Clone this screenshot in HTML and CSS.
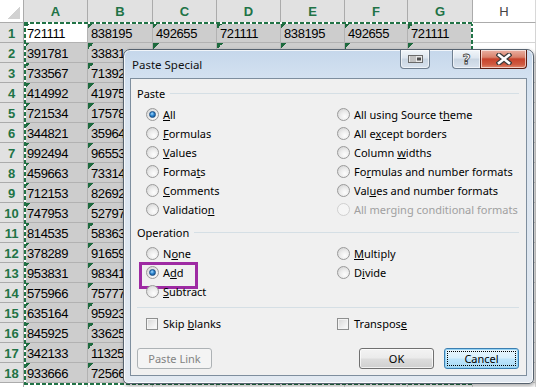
FILE: index.html
```html
<!DOCTYPE html>
<html>
<head>
<meta charset="utf-8">
<link rel="stylesheet" href="styles.css">
</head>
<body>
<div class="app">
  <div class="sheet">
    <div class="corner"></div>
    <div class="ch sel">A</div><div class="ch sel">B</div><div class="ch sel">C</div><div class="ch sel">D</div><div class="ch sel">E</div><div class="ch sel">F</div><div class="ch sel">G</div><div class="ch">H</div>

    <div class="rh sel">1</div><div class="c s act">721111</div><div class="c s">838195</div><div class="c s">492655</div><div class="c s">721111</div><div class="c s">838195</div><div class="c s">492655</div><div class="c s">721111</div><div class="c"></div>
    <div class="rh sel">2</div><div class="c s">391781</div><div class="c s">338314</div><div class="c s"></div><div class="c s"></div><div class="c s"></div><div class="c s"></div><div class="c s"></div><div class="c"></div>
    <div class="rh sel">3</div><div class="c s">733567</div><div class="c s">713928</div><div class="c s"></div><div class="c s"></div><div class="c s"></div><div class="c s"></div><div class="c s"></div><div class="c"></div>
    <div class="rh sel">4</div><div class="c s">414992</div><div class="c s">419753</div><div class="c s"></div><div class="c s"></div><div class="c s"></div><div class="c s"></div><div class="c s"></div><div class="c"></div>
    <div class="rh sel">5</div><div class="c s">721534</div><div class="c s">175786</div><div class="c s"></div><div class="c s"></div><div class="c s"></div><div class="c s"></div><div class="c s"></div><div class="c"></div>
    <div class="rh sel">6</div><div class="c s">344821</div><div class="c s">359647</div><div class="c s"></div><div class="c s"></div><div class="c s"></div><div class="c s"></div><div class="c s"></div><div class="c"></div>
    <div class="rh sel">7</div><div class="c s">992494</div><div class="c s">965531</div><div class="c s"></div><div class="c s"></div><div class="c s"></div><div class="c s"></div><div class="c s"></div><div class="c"></div>
    <div class="rh sel">8</div><div class="c s">459663</div><div class="c s">733149</div><div class="c s"></div><div class="c s"></div><div class="c s"></div><div class="c s"></div><div class="c s"></div><div class="c"></div>
    <div class="rh sel">9</div><div class="c s">712153</div><div class="c s">826924</div><div class="c s"></div><div class="c s"></div><div class="c s"></div><div class="c s"></div><div class="c s"></div><div class="c"></div>
    <div class="rh sel">10</div><div class="c s">747953</div><div class="c s">527971</div><div class="c s"></div><div class="c s"></div><div class="c s"></div><div class="c s"></div><div class="c s"></div><div class="c"></div>
    <div class="rh sel">11</div><div class="c s">814535</div><div class="c s">583634</div><div class="c s"></div><div class="c s"></div><div class="c s"></div><div class="c s"></div><div class="c s"></div><div class="c"></div>
    <div class="rh sel">12</div><div class="c s">378289</div><div class="c s">916598</div><div class="c s"></div><div class="c s"></div><div class="c s"></div><div class="c s"></div><div class="c s"></div><div class="c"></div>
    <div class="rh sel">13</div><div class="c s">953831</div><div class="c s">983415</div><div class="c s"></div><div class="c s"></div><div class="c s"></div><div class="c s"></div><div class="c s"></div><div class="c"></div>
    <div class="rh sel">14</div><div class="c s">575966</div><div class="c s">757772</div><div class="c s"></div><div class="c s"></div><div class="c s"></div><div class="c s"></div><div class="c s"></div><div class="c"></div>
    <div class="rh sel">15</div><div class="c s">635164</div><div class="c s">959233</div><div class="c s"></div><div class="c s"></div><div class="c s"></div><div class="c s"></div><div class="c s"></div><div class="c"></div>
    <div class="rh sel">16</div><div class="c s">845925</div><div class="c s">336256</div><div class="c s"></div><div class="c s"></div><div class="c s"></div><div class="c s"></div><div class="c s"></div><div class="c"></div>
    <div class="rh sel">17</div><div class="c s">342133</div><div class="c s">113257</div><div class="c s"></div><div class="c s"></div><div class="c s"></div><div class="c s"></div><div class="c s"></div><div class="c"></div>
    <div class="rh sel">18</div><div class="c s">933666</div><div class="c s">725661</div><div class="c s"></div><div class="c s"></div><div class="c s"></div><div class="c s"></div><div class="c s"></div><div class="c"></div>
    <div class="rh"></div><div class="c"></div><div class="c"></div><div class="c"></div><div class="c"></div><div class="c"></div><div class="c"></div><div class="c"></div><div class="c"></div>
  </div>

  <div class="ants"></div>

  <div class="dlg">
    <div class="tbar">
      <span class="ttl">Paste Special</span>
      <span class="tb tb-r"><svg width="15" height="8" viewBox="0 0 15 8"><rect x="0.5" y="0.5" width="14" height="7" fill="#e9e9e9" stroke="#6a6a6a"/><path d="M3 1v6M5 1v6M7 1v6" stroke="#9a9a9a" stroke-width="1"/><rect x="9" y="2.5" width="4" height="3" fill="#4d4d4d"/></svg></span>
      <span class="tb tb-h">?</span>
      <span class="tb tb-x"><svg width="16" height="12" viewBox="0 0 16 12"><path d="M3 2L13 10M13 2L3 10" stroke="#3b3b3b" stroke-width="5" stroke-linecap="square"/><path d="M3 2L13 10M13 2L3 10" stroke="#fff" stroke-width="2.6" stroke-linecap="square"/></svg></span>
    </div>
    <div class="pane">
      <div class="legend"><span>Paste</span><i></i></div>
      <div class="opts">
        <div class="col">
          <div class="opt"><span class="rd on"><b></b></span><span><u>A</u>ll</span></div>
          <div class="opt"><span class="rd"></span><span><u>F</u>ormulas</span></div>
          <div class="opt"><span class="rd"></span><span><u>V</u>alues</span></div>
          <div class="opt"><span class="rd"></span><span>Forma<u>t</u>s</span></div>
          <div class="opt"><span class="rd"></span><span><u>C</u>omments</span></div>
          <div class="opt"><span class="rd"></span><span>Validatio<u>n</u></span></div>
        </div>
        <div class="col">
          <div class="opt"><span class="rd"></span><span>All using Source t<u>h</u>eme</span></div>
          <div class="opt"><span class="rd"></span><span>All e<u>x</u>cept borders</span></div>
          <div class="opt"><span class="rd"></span><span>Column <u>w</u>idths</span></div>
          <div class="opt"><span class="rd"></span><span>Fo<u>r</u>mulas and number formats</span></div>
          <div class="opt"><span class="rd"></span><span>Val<u>u</u>es and number formats</span></div>
          <div class="opt dis"><span class="rd"></span><span>All merging conditional formats</span></div>
        </div>
      </div>
      <div class="legend op"><span>Operation</span><i></i></div>
      <div class="opts op">
        <div class="col">
          <div class="opt"><span class="rd"></span><span>N<u>o</u>ne</span></div>
          <div class="opt hl"><span class="rd on"><b></b></span><span>A<u>d</u>d</span></div>
          <div class="opt"><span class="rd"></span><span><u>S</u>ubtract</span></div>
        </div>
        <div class="col">
          <div class="opt"><span class="rd"></span><span><u>M</u>ultiply</span></div>
          <div class="opt"><span class="rd"></span><span>D<u>i</u>vide</span></div>
        </div>
      </div>
      <div class="sep"></div>
      <div class="opts checks">
        <div class="opt"><span class="cb"></span><span>Skip <u>b</u>lanks</span></div>
        <div class="opt"><span class="cb"></span><span>Transpos<u>e</u></span></div>
      </div>
      <div class="btns">
        <span class="btn disabled"><span>Paste Link</span></span>
        <span class="btn ok"><span>OK</span></span>
        <span class="btn focus"><span>Cancel</span></span>
      </div>
    </div>
  </div>
</div>
</body>
</html>
```

FILE: styles.css
```css
* { box-sizing: border-box; margin: 0; padding: 0; }
html, body { width: 536px; height: 387px; overflow: hidden; background: #fff; }
.app { position: relative; width: 536px; height: 387px; font-family: "Liberation Sans", Arial, sans-serif; }

.sheet {
  display: grid;
  grid-template-columns: 24px 64px 65px 64px 64px 64px 63px 65px 63px;
  grid-template-rows: 23px repeat(19, 20px);
}
.corner {
  background: #fff linear-gradient(135deg, transparent 50%, #d2d2d2 50%) right 3px bottom 3px / 13px 13px no-repeat;
  border-right: 1px solid #ababab;
  border-bottom: 1px solid #ababab;
}
.ch {
  display: flex; align-items: center; justify-content: center;
  font-size: 13px; color: #444; background: #fff;
  border-right: 1px solid #d8d8d8; border-bottom: 1px solid #ababab;
}
.ch.sel { background: #e1e1e1; color: #217346; font-weight: bold; border-right-color: #ababab; }
.rh {
  display: flex; align-items: center; justify-content: center;
  font-size: 13px; color: #444; background: #fff; padding-top: 1px;
  border-right: 1px solid #ababab; border-bottom: 1px solid #d8d8d8;
}
.rh.sel { background: #e1e1e1; color: #217346; font-weight: bold; border-bottom-color: #ababab; }
.c {
  border-right: 1px solid #d4d4d4; border-bottom: 1px solid #d4d4d4;
  font-size: 13px; letter-spacing: -0.4px; line-height: 17px; padding-top: 2px;
  padding-left: 3px; white-space: nowrap; overflow: hidden; color: #000;
}
.c.s {
  background: linear-gradient(135deg, #1d6a3e 50%, transparent 50%) 0 0 / 6px 6px no-repeat, #cdcdcd;
  border-color: #b2b2b2;
}
.c.s.act { background-color: #fff; }

.ants {
  position: absolute; left: 24px; top: 22px; width: 449px; height: 363px;
  background:
    repeating-linear-gradient(90deg, #217346 0 4px, #fff 4px 6px) left top / 100% 2px no-repeat,
    repeating-linear-gradient(90deg, #217346 0 4px, #fff 4px 6px) left bottom / 100% 2px no-repeat,
    repeating-linear-gradient(180deg, #217346 0 4px, #fff 4px 6px) left top / 2px 100% no-repeat,
    repeating-linear-gradient(180deg, #217346 0 4px, #fff 4px 6px) right top / 2px 100% no-repeat;
}

/* dialog */
.dlg {
  position: absolute; left: 123px; top: 49px; width: 411px; height: 335px;
  border: 1px solid #56626f; border-radius: 7px 7px 5px 5px;
  background: linear-gradient(180deg, #c5d7eb 0, #d3e1f0 28px, #dbe5f0 60px, #e2e9f1 100%);
  box-shadow: inset 0 0 0 1px rgba(255,255,255,0.75), 1px 2px 4px rgba(0,0,0,0.35);
  padding: 0 6px 7px 6px;
  display: flex; flex-direction: column;
  font-family: "Noto Sans", "Open Sans", sans-serif; font-size: 11px; color: #000;
}
.tbar { height: 28px; display: flex; align-items: flex-start; flex: none; }
.ttl { align-self: center; margin-left: 2px; margin-top: 1px; font-size: 11.5px; color: #111; }
.tb {
  height: 19px; display: flex; align-items: center; justify-content: center;
  border: 1px solid #6f7f90; border-top: none; border-radius: 0 0 4px 4px;
  background: linear-gradient(180deg, #f2f6fa 0, #dde6ef 45%, #c9d5e2 50%, #d9e3ee 100%);
  box-shadow: inset 0 0 0 1px rgba(255,255,255,0.6);
}
.tb-r { width: 30px; margin-left: auto; }
.tb-h {
  width: 28px; margin-left: 22px; border-radius: 0 0 0 4px; border-right: none;
  font-family: "DejaVu Sans", sans-serif; font-weight: bold; font-size: 14px; color: #fff;
  -webkit-text-stroke: 0.8px #3f3f3f;
}
.tb-x {
  width: 47px; border-radius: 0 0 4px 0; border-color: #5b1d12;
  background: linear-gradient(180deg, #eab1a3 0, #d9826c 40%, #c7432c 50%, #cf5a40 80%, #e08a70 100%);
}

.pane {
  flex: 1; border: 1px solid #7e8e9e; background: #f0f0f0;
  padding: 6px 7px 0 6px; display: flex; flex-direction: column;
}
.legend { display: flex; align-items: center; height: 16px; }
.legend span { padding-right: 5px; }
.legend i { flex: 1; height: 1px; background: #d5dfe5; }
.legend.op { margin-top: 5px; }
.opts { display: grid; grid-template-columns: 191px 1fr; padding-left: 9px; margin-top: 4px; }
.col { display: flex; flex-direction: column; }
.opt { height: 19px; display: flex; align-items: center; gap: 4px; white-space: nowrap; position: relative; }
.opt.dis { color: #a0a0a0; }
.rd {
  width: 13px; height: 13px; border-radius: 50%; flex: none;
  border: 1px solid #9a9a9a;
  background: radial-gradient(circle at 62% 68%, #fdfdfd 0, #ececec 45%, #cdcdcd 100%);
  display: flex; align-items: center; justify-content: center;
}
.dis .rd { border-color: #d0d0d0; background: #f5f5f5; }
.rd b {
  width: 7px; height: 7px; border-radius: 50%;
  background: radial-gradient(circle at 40% 35%, #a8dbff 0, #2c86d0 45%, #0d4580 100%);
  border: 1px solid #1a4e83;
}
.hl::after {
  content: ""; position: absolute; left: -7px; top: -1px; width: 53px; height: 21px;
  border: 3px solid #9e2aa3;
}
.sep { height: 1px; background: #d5dfe5; margin-top: 6px; }
.checks { margin-top: 6px; }
.cb {
  width: 12px; height: 12px; flex: none; border: 1px solid #8e8f8f;
  background: linear-gradient(135deg, #d6d6d6 0, #f2f2f2 70%, #fdfdfd 100%);
  box-shadow: inset 0 0 0 1px #f4f4f4;
  margin-right: 1px;
}
.btns { display: flex; margin-top: 15px; }
.btn {
  width: 75px; height: 21px; display: flex; align-items: center; justify-content: center;
  border: 1px solid #707070; border-radius: 3px;
  background: linear-gradient(180deg, #f3f3f3 0, #ebebeb 48%, #dddddd 52%, #cfcfcf 100%);
  box-shadow: inset 0 0 0 1px rgba(255,255,255,0.7);
}
.btn.disabled { color: #838383; border-color: #adb2b5; background: #f4f4f4; box-shadow: none; }
.btn.ok { margin-left: auto; }
.btn.focus {
  margin-left: 10px; border-color: #3c7fb1;
  box-shadow: inset 0 0 0 1px #95d3f5;
  background: linear-gradient(180deg, #eaf6fd 0, #d9f0fc 48%, #bee6fd 52%, #a7d9f5 100%);
  outline: 1px dotted #000; outline-offset: -4px;
}
```
